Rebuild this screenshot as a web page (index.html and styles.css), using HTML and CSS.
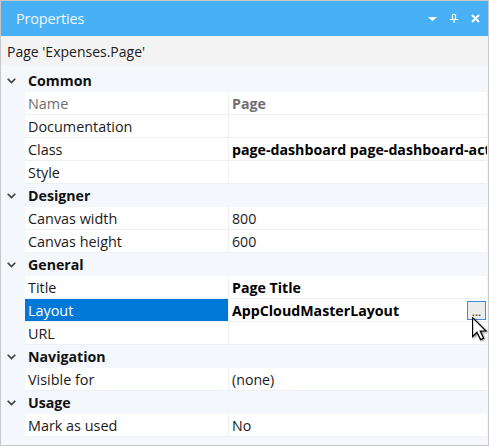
FILE: index.html
```html
<!DOCTYPE html>
<html>
<head>
<meta charset="utf-8">
<link rel="stylesheet" href="styles.css">
</head>
<body>
<div class="panel">
  <div class="titlebar">
    <span class="title">Properties</span>
    <div class="tools">
      <svg class="tool" width="9" height="4" viewBox="0 0 9 4"><path d="M0 0H9L4.5 4Z" fill="#fff"/></svg>
      <svg class="tool" width="8" height="9" viewBox="0 0 8 9"><path d="M2.5 0.5H5.5V5M2.5 0.5V5M0 5.5H8M4 5.5V9" fill="none" stroke="#fff" stroke-width="1.2"/></svg>
      <svg class="tool" width="9" height="9" viewBox="0 0 9 9"><path d="M1 1L8 8M8 1L1 8" stroke="#fff" stroke-width="2"/></svg>
    </div>
  </div>
  <div class="subtitle">Page 'Expenses.Page'</div>
  <div class="grid">
    <div class="cat"><svg class="chev" width="9" height="6" viewBox="0 0 9 6"><path d="M0.7 0.7L4.5 4.5L8.3 0.7" fill="none" stroke="#3c3c3c" stroke-width="1.6"/></svg><span>Common</span></div>
    <div class="row ro"><div class="name">Name</div><div class="val bold">Page</div></div>
    <div class="row"><div class="name">Documentation</div><div class="val"></div></div>
    <div class="row"><div class="name">Class</div><div class="val bold">page-dashboard page-dashboard-active</div></div>
    <div class="row"><div class="name">Style</div><div class="val"></div></div>

    <div class="cat"><svg class="chev" width="9" height="6" viewBox="0 0 9 6"><path d="M0.7 0.7L4.5 4.5L8.3 0.7" fill="none" stroke="#3c3c3c" stroke-width="1.6"/></svg><span>Designer</span></div>
    <div class="row"><div class="name">Canvas width</div><div class="val">800</div></div>
    <div class="row"><div class="name">Canvas height</div><div class="val">600</div></div>

    <div class="cat"><svg class="chev" width="9" height="6" viewBox="0 0 9 6"><path d="M0.7 0.7L4.5 4.5L8.3 0.7" fill="none" stroke="#3c3c3c" stroke-width="1.6"/></svg><span>General</span></div>
    <div class="row"><div class="name">Title</div><div class="val bold">Page Title</div></div>
    <div class="row sel"><div class="name">Layout</div><div class="val bold">AppCloudMasterLayout<span class="ellipsis">...</span></div></div>
    <div class="row"><div class="name">URL</div><div class="val"></div></div>

    <div class="cat"><svg class="chev" width="9" height="6" viewBox="0 0 9 6"><path d="M0.7 0.7L4.5 4.5L8.3 0.7" fill="none" stroke="#3c3c3c" stroke-width="1.6"/></svg><span>Navigation</span></div>
    <div class="row"><div class="name">Visible for</div><div class="val">(none)</div></div>

    <div class="cat"><svg class="chev" width="9" height="6" viewBox="0 0 9 6"><path d="M0.7 0.7L4.5 4.5L8.3 0.7" fill="none" stroke="#3c3c3c" stroke-width="1.6"/></svg><span>Usage</span></div>
    <div class="row"><div class="name">Mark as used</div><div class="val">No</div></div>
  </div>
  <svg class="cursor" width="17" height="26" viewBox="0 0 17 26">
    <defs><filter id="sh" x="-20%" y="-20%" width="160%" height="160%"><feDropShadow dx="1" dy="1" stdDeviation="0.8" flood-color="#000" flood-opacity="0.45"/></filter></defs>
    <path d="M0.6 0.6V19.5L5 15.2L8.6 22.6L11.6 21.3L8.2 14H14Z" fill="#fff" stroke="#000" stroke-width="1.2" stroke-linejoin="miter" filter="url(#sh)"/>
  </svg>
</div>
</body>
</html>
```

FILE: styles.css
```css
* { box-sizing: border-box; }
body { margin: 0; font-family: "Open Sans", "Noto Sans", sans-serif; }
.panel {
  position: relative;
  width: 489px;
  height: 446px;
  border: 1px solid #c8c8c8;
  background: #f4f7fb;
  overflow: hidden;
}
.titlebar {
  height: 35px;
  background: #49b0f5;
  display: flex;
  align-items: center;
  padding: 0 8px 0 15px;
}
.title {
  color: #eef7fe;
  font-size: 14.5px;
  letter-spacing: -0.2px;
  flex: 1;
}
.tools { display: flex; align-items: center; gap: 13px; }
.subtitle {
  height: 31px;
  background: #f3f3f3;
  border-bottom: 1px solid #f9fafc;
  font-size: 14px;
  color: #1a1a1a;
  padding: 0 6px;
  display: flex;
  align-items: center;
}
.grid { padding-top: 2px; }
.cat {
  height: 23px;
  display: flex;
  align-items: center;
  font-size: 14.2px;
  font-weight: 700;
  color: #111;
}
.chev { margin: 0 12px 0 6px; }
.row {
  height: 23px;
  margin: 0 1px 0 24px;
  background: #fff;
  border-bottom: 1px solid #edf0f5;
  display: flex;
  font-size: 14.4px;
  color: #1a1a1a;
}
.name {
  width: 204px;
  border-right: 1px solid #edf0f5;
  padding-left: 3px;
  display: flex;
  align-items: center;
  white-space: nowrap;
}
.val {
  flex: 1;
  padding-left: 3px;
  display: flex;
  align-items: center;
  white-space: nowrap;
  overflow: hidden;
  min-width: 0;
  font-size: 14.2px;
}
.bold { font-weight: 700; color: #000; }
.ro .name, .ro .val { color: #6e6e6e; }
.sel .name { background: #0078d7; color: #fff; }
.ellipsis {
  margin-left: auto;
  margin-right: 1px;
  width: 19px;
  height: 19px;
  border: 1px solid #3d8fdb;
  background: #ececec;
  font-weight: 400;
  font-size: 12px;
  display: flex;
  justify-content: center;
  align-items: flex-end;
  line-height: 14px;
  color: #222;
}
.cursor {
  position: absolute;
  left: 471px;
  top: 316px;
}
```
